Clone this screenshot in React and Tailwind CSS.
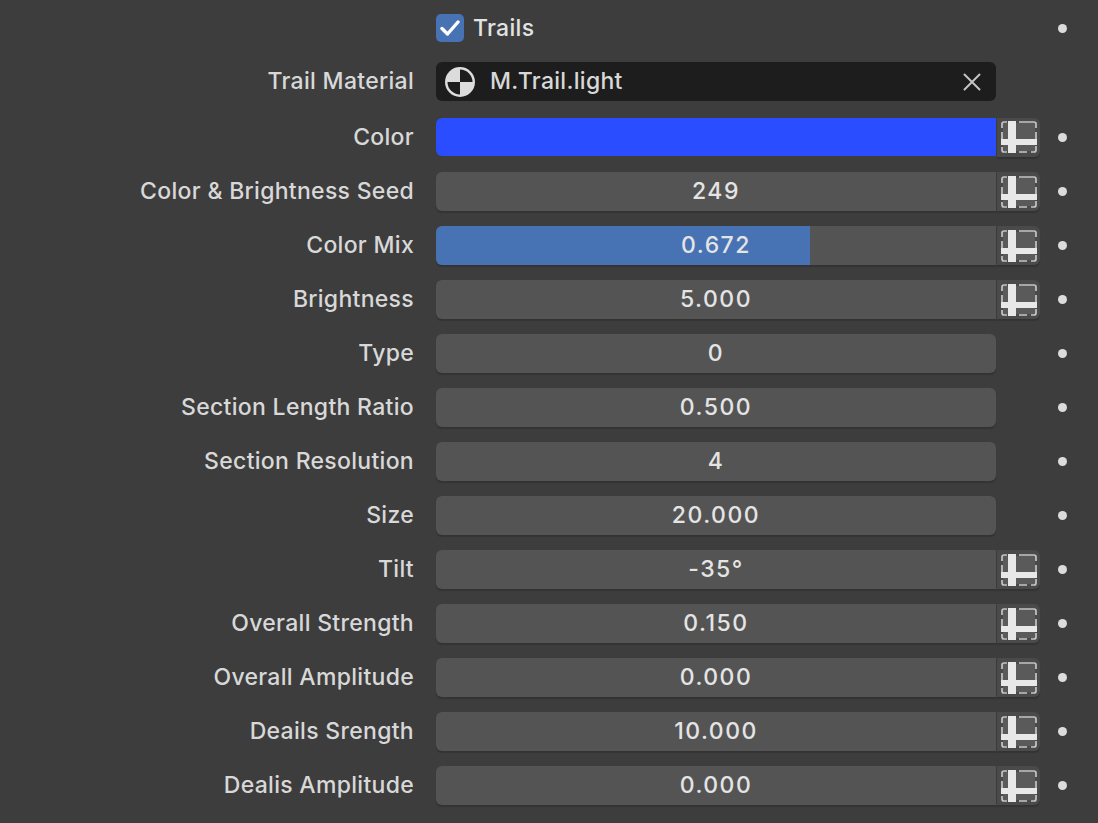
const DecoratorIcon = () => (
  <div className="ml-px flex h-[39px] w-[43px] items-center justify-center rounded-r-[6px] bg-[#4a4a4a] shadow-[0_2px_1px_#333333]">
    <svg width="36" height="32" viewBox="0 0 36 32" fill="none">
      <rect x="2" y="2" width="32" height="28" fill="#5a5a5a" />
      <path d="M1 7V3Q1 1 3 1H6M18 1H33Q35 1 35 3V7M35 11V18M35 25V29Q35 31 33 31H30M26 31H18M6 31H3Q1 31 1 29V26M1 11V18" stroke="#c6c6c6" strokeWidth="1.7" />
      <rect x="7" y="0" width="8" height="32" fill="#e8e8e8" />
      <rect x="0" y="18" width="36" height="6" fill="#e8e8e8" />
    </svg>
  </div>
);

const Dot = ({ show = true }) => (
  <div className="flex w-[44px] justify-center pl-px">
    {show && <div className="h-[9px] w-[9px] rounded-full bg-[#dcdcdc]" />}
  </div>
);

const Row = ({ label, children, decorator, dot = true, className = 'h-[38px]' }) => (
  <div className={`flex items-center ${className}`}>
    <div className="w-[414px] text-right text-[#d8d8d8]">{label}</div>
    <div className="ml-[22px] w-[560px]">{children}</div>
    <div className="w-[44px]">{decorator && <DecoratorIcon />}</div>
    <Dot show={dot} />
  </div>
);

const NumberField = ({ value, fill, decorator }) => (
  <div className={`relative flex h-[39px] items-center justify-center overflow-hidden bg-[#545454] shadow-[0_2px_1px_#333333] ${decorator ? 'rounded-l-[6px]' : 'rounded-[6px]'}`}>
    {fill && <div className="absolute inset-y-0 left-0 w-[374px] bg-[#4772b3]" />}
    <span className="relative tracking-[1.5px] text-[#e4e4e4]">{value}</span>
  </div>
);

const rows = [
  { label: 'Color & Brightness Seed', value: '249', decorator: true },
  { label: 'Color Mix', value: '0.672', decorator: true, fill: true },
  { label: 'Brightness', value: '5.000', decorator: true },
  { label: 'Type', value: '0' },
  { label: 'Section Length Ratio', value: '0.500' },
  { label: 'Section Resolution', value: '4' },
  { label: 'Size', value: '20.000' },
  { label: 'Tilt', value: '-35°', decorator: true },
  { label: 'Overall Strength', value: '0.150', decorator: true },
  { label: 'Overall Amplitude', value: '0.000', decorator: true },
  { label: 'Deails Srength', value: '10.000', decorator: true },
  { label: 'Dealis Amplitude', value: '0.000', decorator: true },
];

export default function App() {
  return (
    <div className="h-[823px] w-[1098px] overflow-hidden bg-[#3d3d3d] font-['Inter',sans-serif] text-[23px] font-[450] tracking-[0.3px]">
      <div className="flex flex-col pt-[14px]">
        <div className="flex h-[28px] items-center">
          <div className="ml-[436px] flex h-[28px] w-[28px] items-center justify-center rounded-[5px] bg-[#4772b3]">
            <svg width="20" height="18" viewBox="0 0 20 18" fill="none">
              <path d="M2 9.5L7.5 15L18 3" stroke="#fff" strokeWidth="3.4" strokeLinecap="round" strokeLinejoin="round" />
            </svg>
          </div>
          <span className="ml-[9px] w-[523px] text-[#e2e2e2]">Trails</span>
          <div className="w-[44px]" />
          <Dot />
        </div>

        <Row label="Trail Material" dot={false} className="mt-[20px] h-[39px]">
          <div className="flex h-[39px] items-center rounded-[6px] bg-[#1d1d1d] pl-[8px] pr-[14px]">
            <svg width="32" height="32" viewBox="0 0 32 32">
              <circle cx="16" cy="16" r="15" fill="#dcdcdc" />
              <path d="M16 16V3.5A12.5 12.5 0 0 1 28.5 16ZM16 16H3.5A12.5 12.5 0 0 0 16 28.5Z" fill="#1d1d1d" />
            </svg>
            <span className="ml-[14px] flex-1 text-[#d8d8d8]">M.Trail.light</span>
            <svg width="20" height="20" viewBox="0 0 20 20">
              <path d="M2.5 2.5L17.5 17.5M17.5 2.5L2.5 17.5" stroke="#c4c4c4" strokeWidth="2" strokeLinecap="round" />
            </svg>
          </div>
        </Row>

        <Row label="Color" decorator className="mt-[17px] h-[38px]">
          <div className="h-[38px] rounded-l-[6px] bg-[#2a4dff]" />
        </Row>

        <div className="mt-[16px] flex flex-col gap-[15px]">
          {rows.map((row) => (
            <Row key={row.label} label={row.label} decorator={row.decorator} className="h-[39px]">
              <NumberField value={row.value} fill={row.fill} decorator={row.decorator} />
            </Row>
          ))}
        </div>
      </div>
    </div>
  );
}
